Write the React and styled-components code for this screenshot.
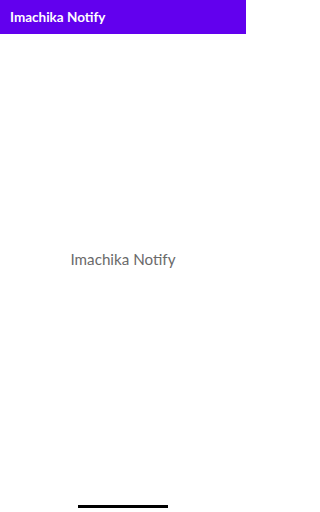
import React from "react";
import { styled, createGlobalStyle } from "styled-components";

const GlobalStyle = createGlobalStyle`
  html, body {
    margin: 0;
    padding: 0;
    background: #ffffff;
  }
  body {
    font-family: Lato, "Noto Sans", sans-serif;
  }
`;

const Screen = styled.div`
  width: 246px;
  height: 512px;
  display: flex;
  flex-direction: column;
  background: #ffffff;
  overflow: hidden;
`;

const AppBar = styled.header`
  height: 34px;
  flex-shrink: 0;
  display: flex;
  align-items: center;
  padding: 0 10px;
  background-color: #6200ee;
`;

const AppTitle = styled.h1`
  margin: 0;
  font-size: 13.5px;
  font-weight: 700;
  color: #ffffff;
`;

const Content = styled.main`
  flex: 1;
  display: flex;
  justify-content: center;
  align-items: center;
  padding-bottom: 18px;
`;

const Message = styled.p`
  margin: 0;
  font-size: 15.2px;
  font-weight: 400;
  color: #6a6a6a;
`;

const NavArea = styled.div`
  height: 10px;
  flex-shrink: 0;
  display: flex;
  justify-content: center;
  padding-top: 3px;
  box-sizing: border-box;
`;

const HomeIndicator = styled.div`
  width: 90px;
  height: 3px;
  background: #000000;
`;

function App() {
  return (
    <>
      <GlobalStyle />
      <Screen>
        <AppBar>
          <AppTitle>Imachika Notify</AppTitle>
        </AppBar>
        <Content>
          <Message>Imachika Notify</Message>
        </Content>
        <NavArea>
          <HomeIndicator />
        </NavArea>
      </Screen>
    </>
  );
}

export default App;
